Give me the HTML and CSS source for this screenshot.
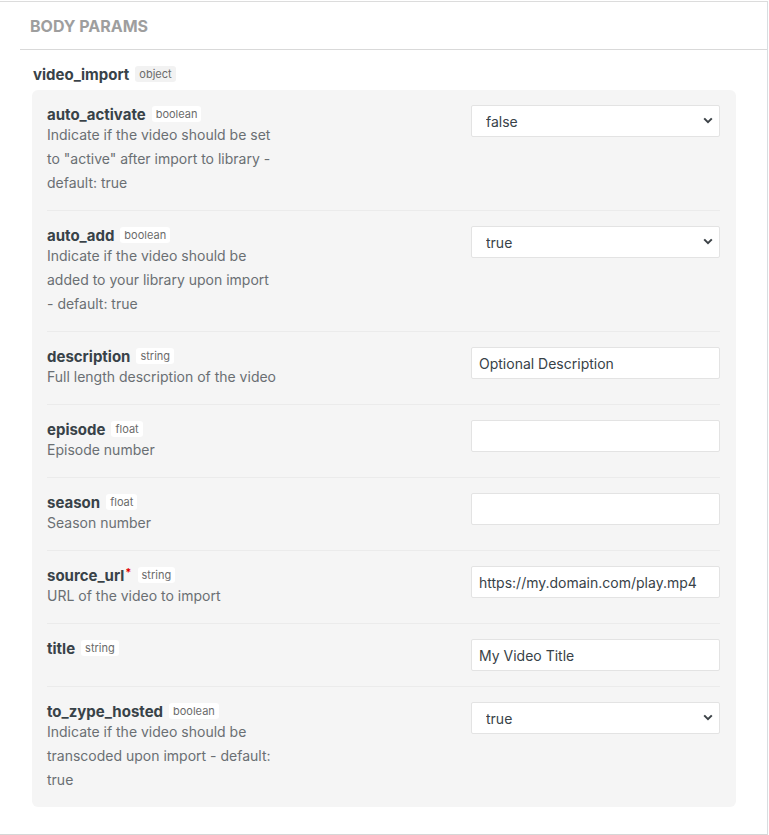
FILE: index.html
```html
<!DOCTYPE html>
<html>
<head>
<meta charset="utf-8">
<link rel="stylesheet" href="styles.css">
</head>
<body>
<div class="frame">
  <section class="section">
    <h2 class="section-title">BODY PARAMS</h2>
    <div class="section-body">
      <div class="obj-head"><span class="obj-name">video_import</span><span class="badge badge-gray">object</span></div>
      <div class="panel">
        <div class="row">
          <div class="info">
            <div class="name-line"><span class="name">auto_activate</span><span class="badge">boolean</span></div>
            <div class="desc">Indicate if the video should be set to "active" after import to library - default: true</div>
          </div>
          <div class="field select-wrap">
            <select class="select"><option>false</option><option>true</option></select>
            <svg class="chev" width="10" height="7" viewBox="0 0 10 7"><path d="M1.2 1.4 L5 5.2 L8.8 1.4" fill="none" stroke="#3c4247" stroke-width="2"/></svg>
          </div>
        </div>
        <div class="row">
          <div class="info">
            <div class="name-line"><span class="name">auto_add</span><span class="badge">boolean</span></div>
            <div class="desc">Indicate if the video should be added to your library upon import - default: true</div>
          </div>
          <div class="field select-wrap">
            <select class="select"><option>true</option><option>false</option></select>
            <svg class="chev" width="10" height="7" viewBox="0 0 10 7"><path d="M1.2 1.4 L5 5.2 L8.8 1.4" fill="none" stroke="#3c4247" stroke-width="2"/></svg>
          </div>
        </div>
        <div class="row">
          <div class="info">
            <div class="name-line"><span class="name">description</span><span class="badge">string</span></div>
            <div class="desc">Full length description of the video</div>
          </div>
          <div class="field"><input class="input" type="text" value="Optional Description"></div>
        </div>
        <div class="row">
          <div class="info">
            <div class="name-line"><span class="name">episode</span><span class="badge">float</span></div>
            <div class="desc">Episode number</div>
          </div>
          <div class="field"><input class="input" type="text" value=""></div>
        </div>
        <div class="row">
          <div class="info">
            <div class="name-line"><span class="name">season</span><span class="badge">float</span></div>
            <div class="desc">Season number</div>
          </div>
          <div class="field"><input class="input" type="text" value=""></div>
        </div>
        <div class="row">
          <div class="info">
            <div class="name-line"><span class="name">source_url<span class="req">*</span></span><span class="badge">string</span></div>
            <div class="desc">URL of the video to import</div>
          </div>
          <div class="field"><input class="input" type="text" value="https://my.domain.com/play.mp4"></div>
        </div>
        <div class="row">
          <div class="info">
            <div class="name-line"><span class="name">title</span><span class="badge">string</span></div>
          </div>
          <div class="field"><input class="input" type="text" value="My Video Title"></div>
        </div>
        <div class="row">
          <div class="info">
            <div class="name-line"><span class="name">to_zype_hosted</span><span class="badge">boolean</span></div>
            <div class="desc">Indicate if the video should be transcoded upon import - default: true</div>
          </div>
          <div class="field select-wrap">
            <select class="select"><option>true</option><option>false</option></select>
            <svg class="chev" width="10" height="7" viewBox="0 0 10 7"><path d="M1.2 1.4 L5 5.2 L8.8 1.4" fill="none" stroke="#3c4247" stroke-width="2"/></svg>
          </div>
        </div>
      </div>
    </div>
  </section>
</div>
</body>
</html>
```
FILE: styles.css
```css
* { box-sizing: border-box; }
html, body { margin: 0; padding: 0; background: #fff; }
body {
  font-family: Inter, "Liberation Sans", Arial, sans-serif;
  color: #384248;
}
.frame {
  width: 768px;
  height: 834px;
  margin-top: 1px;
  border-top: 1px solid #dcdcdc;
  border-right: 1px solid #d8dde0;
  border-bottom: 1px solid #d6d6d6;
}
.section {
  margin-left: 20px;
}
.section-title {
  margin: 0;
  height: 48px;
  padding: 15px 0 0 10px;
  font-size: 16px;
  line-height: 19px;
  font-weight: 700;
  color: #9e9e9e;
  border-bottom: 1px solid #d9d9d9;
}
.section-body {
  padding: 13px 31px 0 12px;
}
.obj-head {
  display: flex;
  align-items: center;
  height: 22px;
  padding-left: 1px;
}
.obj-name {
  font-size: 15px;
  font-weight: 700;
  color: #384248;
}
.badge {
  display: inline-block;
  margin-left: 6px;
  padding: 1px 4px;
  font-size: 11px;
  line-height: 14px;
  color: #6b6b6b;
  background: #fff;
  border-radius: 3px;
}
.badge-gray { background: #f2f2f2; }
.panel {
  margin-top: 5px;
  background: #f5f5f5;
  border-radius: 6px;
  padding: 0 16px 0 15px;
}
.row {
  display: flex;
  justify-content: space-between;
  align-items: flex-start;
  padding: 15px 0;
  border-top: 1px solid #ebebeb;
}
.row:first-child { border-top: none; }
.info {
  width: 230.5px;
}
.name-line {
  display: flex;
  align-items: center;
  height: 18px;
}
.name {
  font-size: 15px;
  font-weight: 700;
  color: #384248;
}
.req {
  color: #e00000;
  font-size: 11px;
  vertical-align: top;
  position: relative;
  top: -1px;
  margin-left: 1px;
}
.desc {
  font-size: 14px;
  line-height: 24px;
  color: #6a6f73;
}
.field {
  width: 249px;
}
.select-wrap { position: relative; }
.select, .input {
  display: block;
  width: 100%;
  height: 32px;
  margin: 0;
  border: 1px solid #e3e3e3;
  border-radius: 2px;
  background: #fff;
  font-family: Inter, "Liberation Sans", Arial, sans-serif;
  font-size: 14px;
  color: #384248;
  outline: none;
}
.select {
  -webkit-appearance: none;
  appearance: none;
  padding: 0 0 0 14px;
}
.input {
  padding: 0 7px;
}
.chev {
  position: absolute;
  right: 7px;
  top: 12px;
  pointer-events: none;
}
```
